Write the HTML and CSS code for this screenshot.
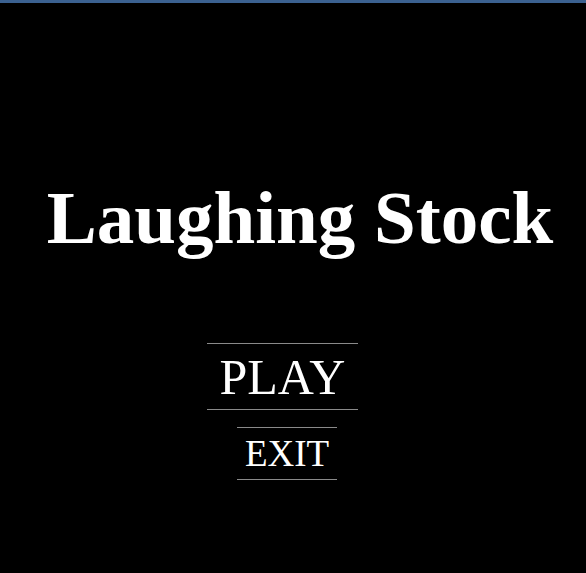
FILE: index.html
```html
<!DOCTYPE html>
<html lang="en">
<head>
    <meta charset="UTF-8">
    <meta name="viewport" content="width=device-width, initial-scale=1.0">
    <title>Laughing Stock</title>
    <link rel="stylesheet" href="styles.css">
</head>
<body>
    <div class="top-bar"></div>
    <main class="menu">
        <h1 class="title">Laughing Stock</h1>
        <nav class="buttons">
            <button class="menu-btn play">PLAY</button>
            <button class="menu-btn exit">EXIT</button>
        </nav>
    </main>
</body>
</html>
```

FILE: styles.css
```css
body {
    margin: 0;
    padding: 0;
    background-color: #000;
    color: #fff;
    font-family: "Liberation Serif", "Times New Roman", serif;
    height: 573px;
    overflow: hidden;
}
.top-bar {
    height: 3px;
    background-color: #3b6190;
}
.menu {
    display: flex;
    flex-direction: column;
    align-items: center;
}
.title {
    margin: 170px 0 0 14px;
    font-size: 75px;
    font-weight: bold;
    line-height: 90px;
}
.buttons {
    display: flex;
    flex-direction: column;
    align-items: center;
    margin: 80px 0 0 -21px;
}
.menu-btn {
    background: none;
    color: #fff;
    font-family: inherit;
    border: none;
    border-top: 1px solid #8a8a8a;
    border-bottom: 1px solid #8a8a8a;
    padding: 0;
    cursor: pointer;
}
.play {
    width: 151px;
    height: 67px;
    font-size: 50px;
}
.exit {
    width: 100px;
    height: 53px;
    margin: 17px 0 0 9px;
    font-size: 37px;
}
```
